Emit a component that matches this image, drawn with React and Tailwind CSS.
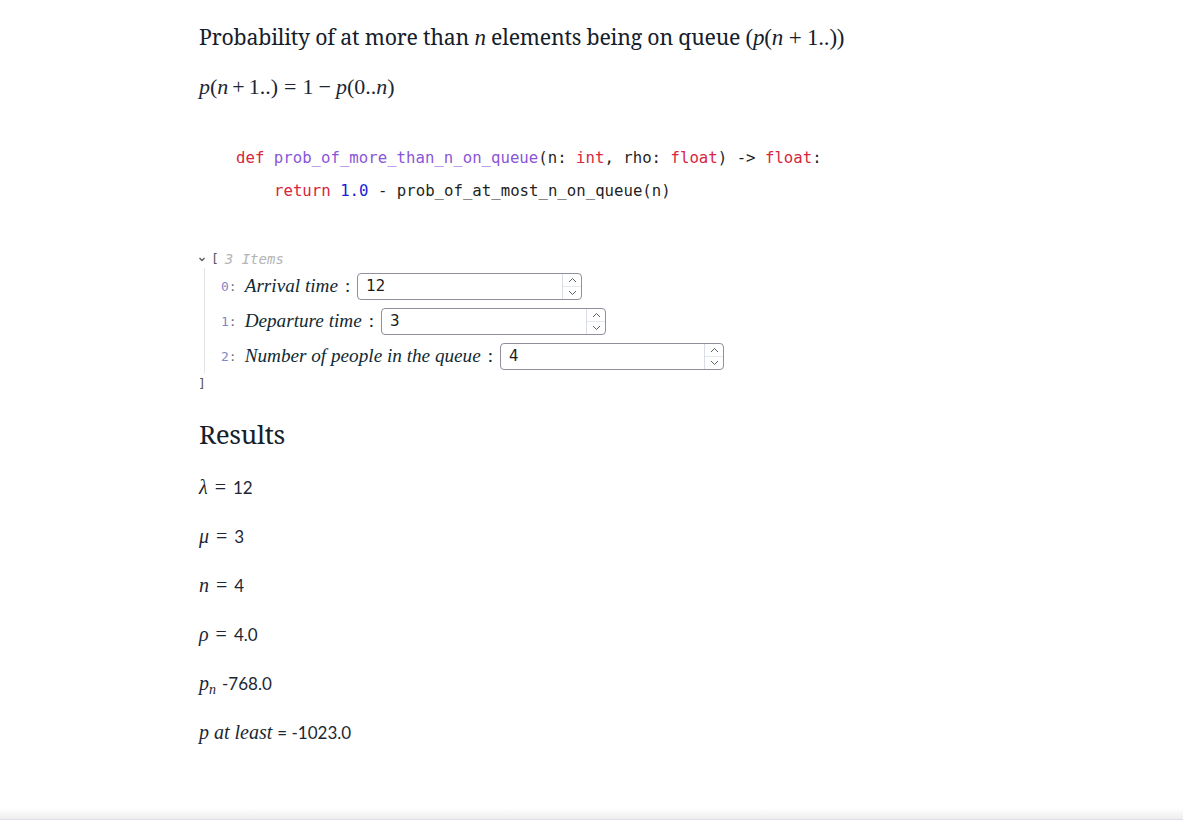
import React from "react";

const serif = { fontFamily: '"Liberation Serif", "DejaVu Serif", serif' };

function M({ children, className = "" }) {
  // inline math, italic serif
  return (
    <span className={`italic ${className}`} style={serif}>
      {children}
    </span>
  );
}

function R({ children, className = "" }) {
  return (
    <span className={`not-italic ${className}`} style={serif}>
      {children}
    </span>
  );
}

function NumberBox({ value, width }) {
  return (
    <div
      className={`flex h-[27px] items-stretch rounded-[4px] border border-[#8f8f9d] bg-white ${width}`}
    >
      <div className="flex flex-1 items-center pl-[8px] text-[15px] text-[#1b1b1b] font-['DejaVu_Sans',sans-serif]">
        {value}
      </div>
      <div className="flex w-[19px] flex-col border-l border-[#d8dde6]">
        <div className="flex flex-1 items-center justify-center border-b border-[#e3e7ee]">
          <svg width="9" height="6" viewBox="0 0 9 6" fill="none">
            <path d="M1 5l3.5-3.5L8 5" stroke="#5b6170" strokeWidth="1" />
          </svg>
        </div>
        <div className="flex flex-1 items-center justify-center">
          <svg width="9" height="6" viewBox="0 0 9 6" fill="none">
            <path d="M1 1l3.5 3.5L8 1" stroke="#5b6170" strokeWidth="1" />
          </svg>
        </div>
      </div>
    </div>
  );
}

function Row({ idx, label, value, width }) {
  return (
    <div className="flex h-[35px] items-center">
      <span className="font-['DejaVu_Sans_Mono',monospace] text-[13px] text-[#8087c4]">
        {idx}
      </span>
      <span className="font-['DejaVu_Sans_Mono',monospace] text-[13px] text-[#6b7280]">:</span>
      <span className="ml-[8px] text-[19.2px] italic text-[#102a33]" style={serif}>
        {label}
      </span>
      <span className="ml-[7px] mr-[7px] text-[19px] text-[#102a33]" style={serif}>
        :
      </span>
      <NumberBox value={value} width={width} />
    </div>
  );
}

function Res({ sym, children }) {
  return (
    <p className="flex items-baseline">
      <M className="text-[20px]">{sym}</M>
      <R className="mx-[7px] text-[20px]">=</R>
      {children}
    </p>
  );
}

export default function App() {
  const mono = "font-['DejaVu_Sans_Mono',monospace] text-[15.7px]";
  return (
    <div className="relative h-[825px] w-full overflow-hidden bg-white text-[#1c2733]">
      <div className="pl-[199px] pt-[21px]">
        <p className="text-[21.3px] leading-[30px] text-[#15202b] font-['Noto_Serif','DejaVu_Serif',serif] tracking-[-0.2px]">
          Probability of at more than <M className="text-[23px]">n</M> elements being on queue{" "}
          <span className="text-[23px]">
            <R>(</R>
            <M>p</M>
            <R>(</R>
            <M>n</M>
            <R> + 1..))</R>
          </span>
        </p>

        <p className="mt-[17px] text-[22px] leading-[30px]">
          <M>p</M>
          <R>(</R>
          <M>n</M>
          <R className="mx-[4px]">+</R>
          <R>1..)</R>
          <R className="mx-[6px]">=</R>
          <R>1</R>
          <R className="mx-[5px]">−</R>
          <M>p</M>
          <R>(0..</R>
          <M>n</M>
          <R>)</R>
        </p>

        <div className={`mt-[39px] pl-[37px] ${mono} leading-[33px] text-[#1f1f1f]`}>
          <div>
            <span className="text-[#d7263d]">def</span>{" "}
            <span className="text-[#8a56d8]">prob_of_more_than_n_on_queue</span>(n:{" "}
            <span className="text-[#d7263d]">int</span>, rho:{" "}
            <span className="text-[#d7263d]">float</span>) -&gt;{" "}
            <span className="text-[#d7263d]">float</span>:
          </div>
          <div className="pl-[38px]">
            <span className="text-[#d7263d]">return</span>{" "}
            <span className="text-[#1b1fd6]">1.0</span> - prob_of_at_most_n_on_queue(n)
          </div>
        </div>

        <div className="mt-[43px] -ml-[2px]">
          <div className="flex h-[18px] items-center font-['DejaVu_Sans_Mono',monospace] text-[13px]">
            <svg width="10" height="10" viewBox="0 0 10 10" className="mr-[4px]" fill="none">
              <path d="M2.5 4l2.5 2.5L7.5 4" stroke="#555" strokeWidth="1.3" />
            </svg>
            <span className="text-[#555]">[</span>
            <span className="ml-[6px] text-[14px] italic text-[#b4b4b4]">3 Items</span>
          </div>
          <div className="ml-[7px] border-l border-[#e5e5e5] pl-[16px] pt-[1px]">
            <Row idx="0" label="Arrival time" value="12" width="w-[225px]" />
            <Row idx="1" label="Departure time" value="3" width="w-[225px]" />
            <Row idx="2" label="Number of people in the queue" value="4" width="w-[224px]" />
          </div>
          <div className="ml-[1px] h-[18px] font-['DejaVu_Sans_Mono',monospace] text-[13px] text-[#555]">
            ]
          </div>
        </div>

        <h2 className="mt-[24px] text-[26px] leading-[36px] text-[#15202b] font-['Noto_Serif','DejaVu_Serif',serif] tracking-[-0.3px]">
          Results
        </h2>

        <div className="mt-[20px] flex flex-col gap-[18px] text-[17px] leading-[30px] font-['Lato',sans-serif]">
          <Res sym="λ">12</Res>
          <Res sym="μ">3</Res>
          <Res sym="n">4</Res>
          <Res sym="ρ">4.0</Res>
          <p className="flex items-baseline">
            <M className="text-[20px]">
              p<sub className="text-[14px]">n</sub>
            </M>
            <span className="ml-[6px]">-768.0</span>
          </p>
          <p className="flex items-baseline">
            <M className="text-[20px]">p at least</M>
            <span className="ml-[5px]">= -1023.0</span>
          </p>
        </div>
      </div>

      <div className="absolute bottom-[5px] left-0 h-[12px] w-full bg-gradient-to-b from-white to-[#ececec]" />
      <div className="absolute bottom-[5px] left-0 h-px w-full bg-[#e0dde8]" />
    </div>
  );
}
